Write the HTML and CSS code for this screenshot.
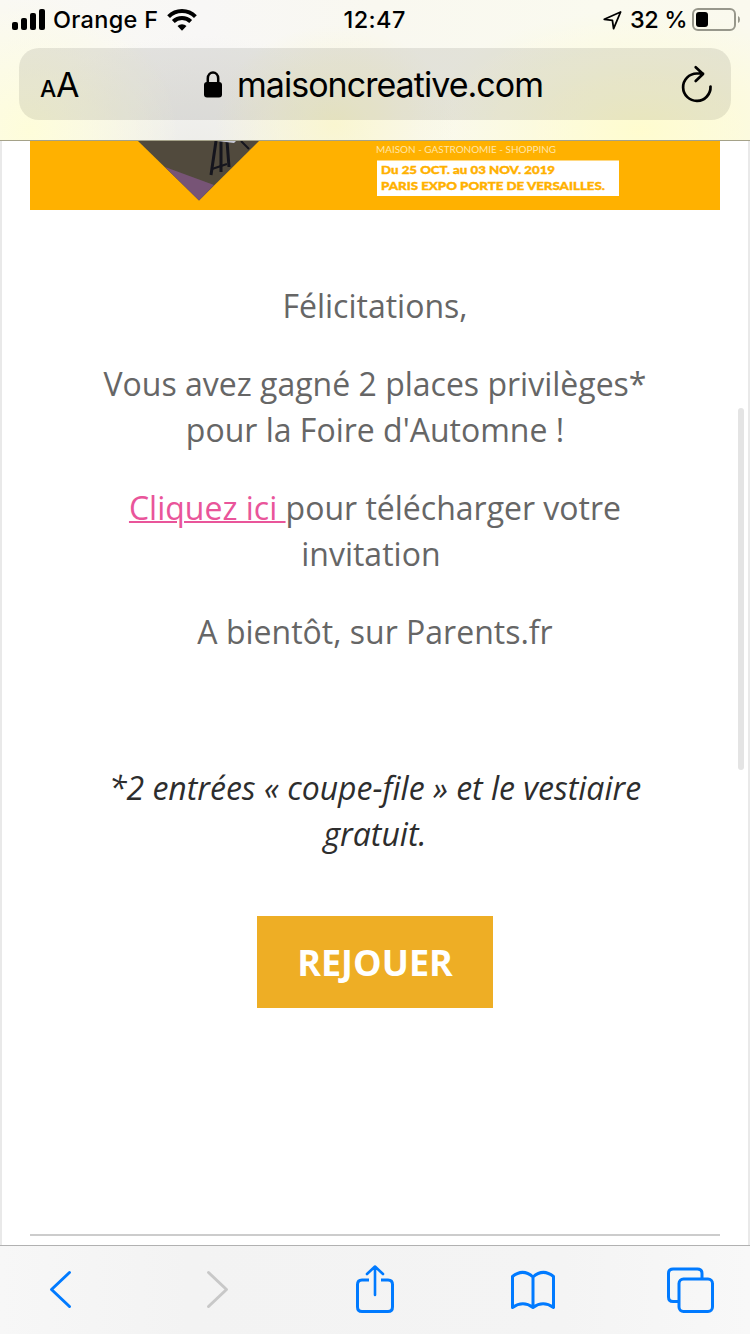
FILE: index.html
```html
<!DOCTYPE html>
<html lang="fr">
<head>
<meta charset="utf-8">
<title>maisoncreative.com</title>
<link rel="stylesheet" href="styles.css">
</head>
<body>
<div class="screen">
  <header class="chrome">
    <div class="status">
      <div class="status-left">
        <svg class="signal" width="34" height="22" viewBox="0 0 34 22"><rect x="0" y="13" width="6" height="8" rx="2"/><rect x="9" y="9" width="6" height="12" rx="2"/><rect x="18" y="4" width="6" height="17" rx="2"/><rect x="27" y="0" width="6" height="21" rx="2"/></svg>
        <span class="carrier">Orange F</span>
        <svg class="wifi" width="30" height="22" viewBox="0 0 30 22"><path d="M1.6 7.6a19 19 0 0 1 26.8 0M6.3 12.5a12.3 12.3 0 0 1 17.4 0" fill="none" stroke="#000" stroke-width="4"/><path d="M10.5 17a6.5 6.5 0 0 1 9 0L15 21.8z"/></svg>
      </div>
      <span class="time">12:47</span>
      <div class="status-right">
        <svg class="locate" width="19" height="19" viewBox="0 0 19 19"><path d="M1.3 8.3 17.6 1 10.6 17.6 9.4 9.3z" fill="none" stroke="#000" stroke-width="1.8" stroke-linejoin="round"/></svg>
        <span class="percent">32 %</span>
        <svg class="battery" width="48" height="23" viewBox="0 0 48 23"><rect x="1" y="1" width="42" height="21" rx="5" fill="none" stroke="#97978b" stroke-width="2"/><rect x="4" y="4" width="12" height="15" rx="3"/><path d="M46 8q2 .8 2 3.500T46 15z" fill="#97978b"/></svg>
      </div>
    </div>
    <div class="address">
      <div class="text-size"><span class="small-a">A</span><span class="big-a">A</span></div>
      <div class="domain">
        <svg width="18" height="27" viewBox="0 0 18 27"><rect y="11" width="18" height="15.500" rx="3"/><path d="M3.800 12V7.500C3.800-.5 14.200-.5 14.200 7.500V12" fill="none" stroke="#000" stroke-width="2.500"/></svg>
        <span class="host">maisoncreative.com</span>
      </div>
      <svg class="reload" width="32" height="38" viewBox="0 0 32 38"><path d="M29.500 21.500A13.700 13.700 0 1 1 15.800 8.500H22M14.700 2.200 22 9 14.700 16" fill="none" stroke="#000" stroke-width="2.700" stroke-linecap="round" stroke-linejoin="round"/></svg>
    </div>
  </header>
  <main class="page">
    <svg class="banner" width="690" height="69" viewBox="0 0 690 69">
      <rect width="690" height="69" fill="#ffb100"/>
      <path d="M108 0H229L169 59.500z" fill="#514a3d"/>
      <path d="M135 26 184 44 169 59.500z" fill="#775476"/>
      <path d="M186 0 181 34M191 0V31M197 0 199 26" fill="none" stroke="#15151d" stroke-width="3"/>
      <path d="M182 28 197 23M211 0 219 8" fill="none" stroke="#15151d" stroke-width="2"/>
      <path d="M187 0H206L204 2z" fill="#c6c8d5"/>
      <text class="tagline" x="346" y="11.500" textLength="180" lengthAdjust="spacingAndGlyphs">MAISON - GASTRONOMIE - SHOPPING</text>
      <rect x="347" y="19.500" width="242" height="35.500" fill="#fff"/>
      <text class="dates" x="351" y="33" textLength="174" lengthAdjust="spacingAndGlyphs">Du 25 OCT. au 03 NOV. 2019</text>
      <text class="dates" x="351" y="49" textLength="224" lengthAdjust="spacingAndGlyphs">PARIS EXPO PORTE DE VERSAILLES.</text>
    </svg>
    <div class="message">
      <p>Félicitations,</p>
      <p>Vous avez gagné 2 places privilèges*<br>pour la Foire d'Automne !</p>
      <p><a class="download" href="#">Cliquez ici </a>pour télécharger votre<br>invitation&nbsp;</p>
      <p>A bientôt, sur Parents.fr</p>
      <p class="note">*2 entrées « coupe-file » et le vestiaire<br>gratuit.</p>
    </div>
    <a class="replay" href="#">REJOUER</a>
    <div class="rule"></div>
    <div class="scrollbar"></div>
  </main>
  <nav class="toolbar">
    <svg width="750" height="88" viewBox="0 0 750 88" fill="none" stroke="#007aff" stroke-width="3" stroke-linecap="round" stroke-linejoin="round">
      <path d="M69.500 26.500 51.500 43.500 69.500 60.500"/>
      <path d="M208.500 26.500 226.500 43.500 208.500 60.500" stroke="#c8c8c8"/>
      <path d="M369 34H362Q357.500 34 357.500 38.500V61Q357.500 65.500 362 65.500H388Q392.500 65.500 392.500 61V38.500Q392.500 34 388 34H381" stroke-linecap="butt"/>
      <path d="M375 49V21M367 28 375 20.500 383 28" stroke-width="2.600"/>
      <path d="M533 31Q523 22 512.500 30.500V61.500Q523 54 533 61.500 543 54 553.500 61.500V30.500Q543 22 533 31V61"/>
      <path d="M702 32V27.500Q702 23 697.500 23H673Q668.500 23 668.500 27.500V51Q668.500 55.500 673 55.500H678"/>
      <rect x="679" y="33" width="33.500" height="32.500" rx="4.500"/>
    </svg>
  </nav>
</div>
</body>
</html>
```
FILE: styles.css
```css
* { box-sizing: border-box; }
body { margin: 0; background: #fff; color: #000; font-family: "Open Sans", sans-serif; }
.screen { display: flex; flex-direction: column; width: 750px; height: 1334px; overflow: hidden; }

.chrome {
  height: 141px;
  flex: none;
  padding: 0 19px;
  border-bottom: 1px solid #a5a289;
  font-family: Inter, sans-serif;
  background:
    radial-gradient(ellipse 220px 120px at 640px 130px, rgba(255, 252, 205, .95), rgba(255, 252, 205, 0)),
    radial-gradient(ellipse 120px 100px at 335px 125px, rgba(250, 246, 205, .9), rgba(250, 246, 205, 0)),
    radial-gradient(ellipse 150px 130px at 30px 130px, rgba(254, 253, 218, 1), rgba(254, 253, 218, 0)),
    radial-gradient(ellipse 180px 110px at 195px 145px, rgba(236, 236, 232, .9), rgba(236, 236, 232, 0)),
    linear-gradient(90deg, #faf9f3, #f8f7f6 27%, #f9f8f0 50%, #fafaef 80%, #faf9ee);
}
.status { height: 48px; display: grid; grid-template-columns: 1fr auto 1fr; margin: 0 -9px 0 -7px; font-size: 23.500px; font-weight: 500; line-height: 40px; }
.status svg { flex: none; }
.status-left, .status-right { display: flex; align-items: flex-start; }
.status-right { justify-content: flex-end; }
.signal { margin-top: 9px; }
.carrier { margin-left: 7px; width: 107px; letter-spacing: .3px; white-space: nowrap; }
.wifi { margin: 9px 0 0 7px; }
.time { width: 64px; letter-spacing: .4px; margin-left: -1px; }
.locate { margin: 11px 8px 0 0; }
.percent { width: 59px; letter-spacing: -.4px; white-space: nowrap; }
.battery { margin: 8px 0 0 3px; }

.address { height: 72px; padding: 0 18px 0 21px; border-radius: 20px; background: rgba(50, 50, 35, .105); display: grid; grid-template-columns: 1fr auto 1fr; align-items: center; }
.text-size { display: flex; align-items: baseline; line-height: 40px; padding-top: 5px; }
.small-a { font-size: 23px; width: 16px; font-weight: 500; }
.big-a { font-size: 34px; }
.domain { display: flex; align-items: center; gap: 15px; margin-left: -6px; }
.host { width: 306px; font-size: 34px; line-height: 44px; letter-spacing: -.97px; padding-top: 1px; white-space: nowrap; }
.reload { justify-self: end; }

.page { position: relative; flex: 1; display: flex; flex-direction: column; align-items: center; border: solid #e9e9e9; border-width: 0 2px; }
.banner { flex: none; display: block; }
.tagline { font-family: Lato, sans-serif; font-size: 10px; fill: #ffe6a8; }
.dates { font-family: Lato, sans-serif; font-size: 12px; font-weight: 900; fill: #ffb100; stroke: #ffb100; stroke-width: .4px; }
.message { width: 100%; margin-top: 73px; text-align: center; font-size: 32px; line-height: 46px; color: #666; }
.message p { margin: 0 0 32px; }
.message .note { margin: 110px 0 0; font-style: italic; color: #2d2d2d; }
.download { color: #e9559a; text-decoration: underline; text-decoration-thickness: 2px; }
.replay { width: 236px; height: 92px; margin-top: 59px; flex: none; background: #eeae25; color: #fff; font-size: 36px; font-weight: 700; line-height: 94px; text-align: center; text-decoration: none; }
.rule { width: 690px; height: 2px; margin-top: 226px; background: #ccc; }
.scrollbar { position: absolute; right: 4px; top: 267px; width: 6px; height: 362px; border-radius: 3px; background: #e4e4e4; }

.toolbar { flex: none; height: 89px; border-top: 1px solid #b1b1b1; background: linear-gradient(90deg, #f7f7f7, #f3f3f3 25%, #f4f4f4 75%, #f8f8f8); }
.toolbar svg { display: block; }
```
